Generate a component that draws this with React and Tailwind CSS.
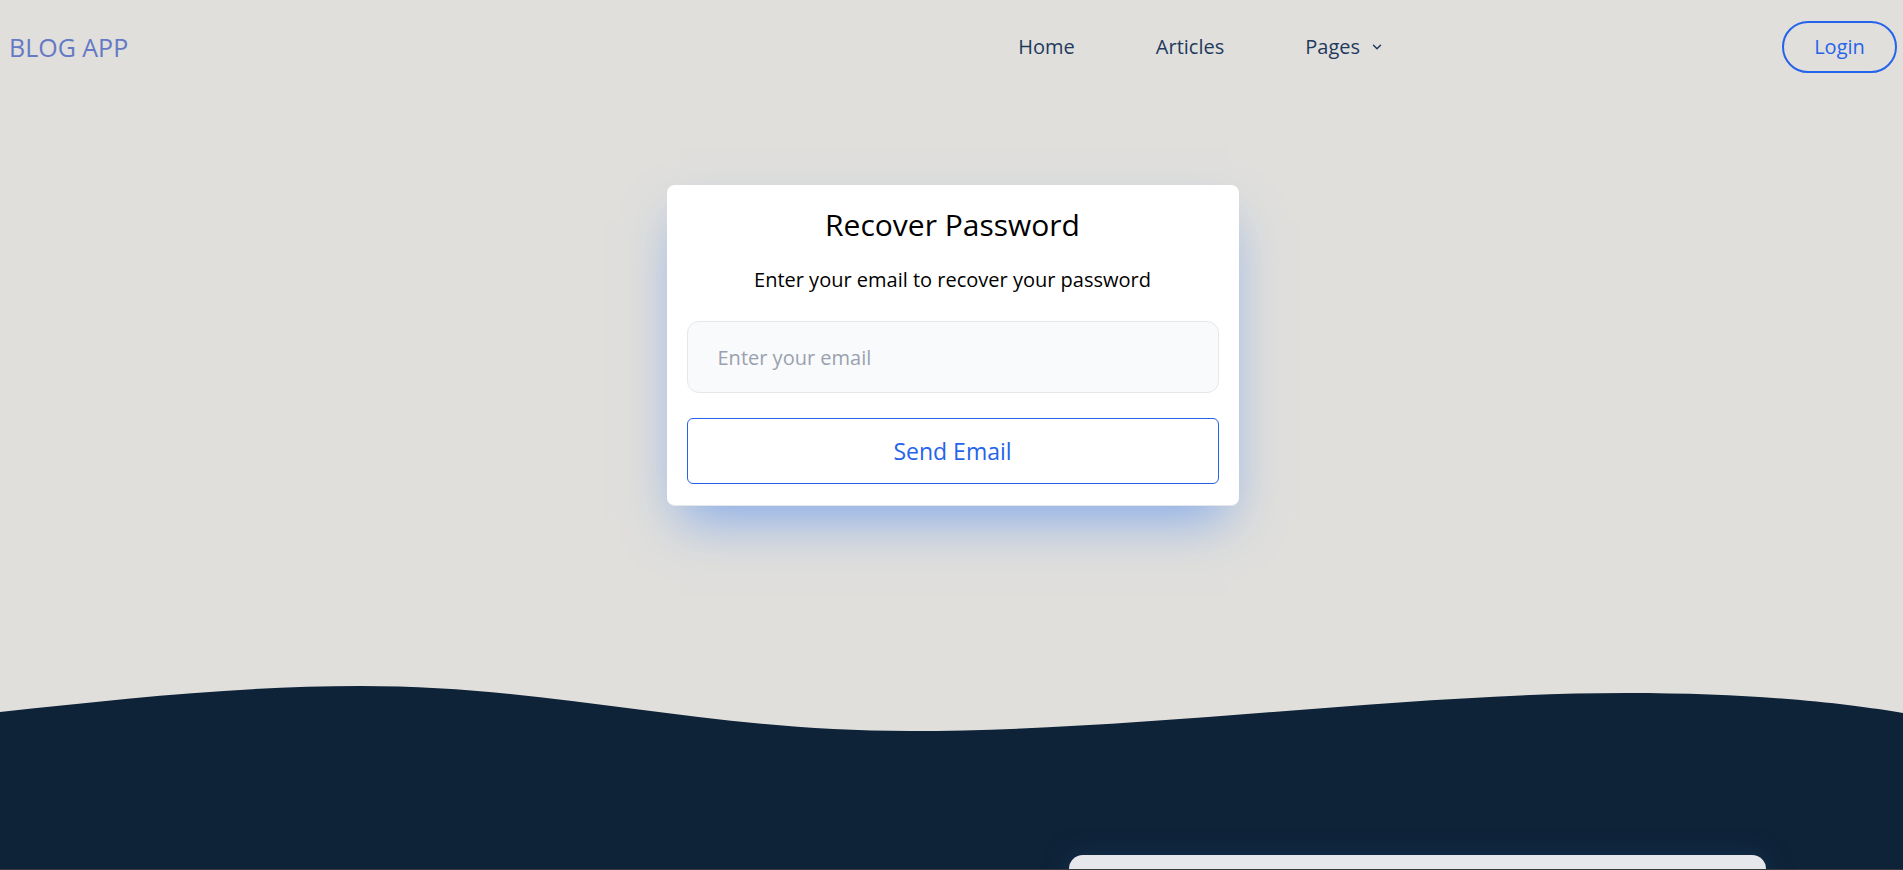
import React from "react";
import { ChevronDown } from "lucide-react";

function Navbar() {
  return (
    <nav className="flex items-center h-[94px] pl-[9px] pr-[6px] shrink-0">
      <a href="#" className="text-[25px] text-[#6579c4] leading-none">BLOG APP</a>
      <div className="flex-1" />
      <ul className="flex items-center gap-[81px] mr-[398px] text-[20px] text-[#1f3a5c]">
        <li>Home</li>
        <li>Articles</li>
        <li className="flex items-center gap-[10px]">
          Pages <ChevronDown size={14} strokeWidth={2.5} />
        </li>
      </ul>
      <button className="w-[115px] h-[52px] rounded-full border-2 border-[#2563eb] text-[20px] text-[#2563eb]">
        Login
      </button>
    </nav>
  );
}

function RecoverCard() {
  return (
    <div className="mx-auto mt-[91px] w-[572px] translate-x-[1px] bg-white rounded-lg px-[20px] pt-[20px] pb-[21px] shadow-[0_25px_50px_-12px_rgba(59,130,246,0.55)] border-b border-gray-200 shrink-0">
      <h1 className="text-center text-[30px] leading-[40px] text-black">Recover Password</h1>
      <p className="mt-[21px] text-center text-[20px] leading-[28px] text-black">
        Enter your email to recover your password
      </p>
      <input
        type="email"
        placeholder="Enter your email"
        className="mt-[27px] block w-full h-[72px] rounded-xl border border-gray-200 bg-gray-50 pl-[30px] text-[20px] placeholder:text-gray-400 outline-none"
      />
      <button className="mt-[25px] block w-full h-[66px] rounded-md border border-[#2563eb] text-[23px] text-[#2563eb]">
        Send Email
      </button>
    </div>
  );
}

export default function App() {
  return (
    <div className="h-[870px] bg-[#e0dfdc] flex flex-col overflow-hidden border-b border-[#38393b]" style={{ fontFamily: '"Open Sans", "Noto Sans", sans-serif' }}>
      <Navbar />
      <RecoverCard />
      <svg className="block mt-[174px] w-full h-[62px] shrink-0" viewBox="0 0 1903 62" preserveAspectRatio="none">
        <path
          d="M0,32 C120,19 240,6 360,6 C560,6 700,51 910,51 C1150,51 1400,13 1626,13 C1760,13 1850,24 1903,33 L1903,62 L0,62 Z"
          fill="#0e2338"
        />
      </svg>
      <footer className="flex-1 bg-[#0e2338] pt-[113px]">
        <div className="ml-[1069px] w-[697px] h-[100px] rounded-t-[14px] bg-[#e5e7eb] shadow-[0_0_24px_rgba(30,60,100,0.5)]" />
      </footer>
    </div>
  );
}
